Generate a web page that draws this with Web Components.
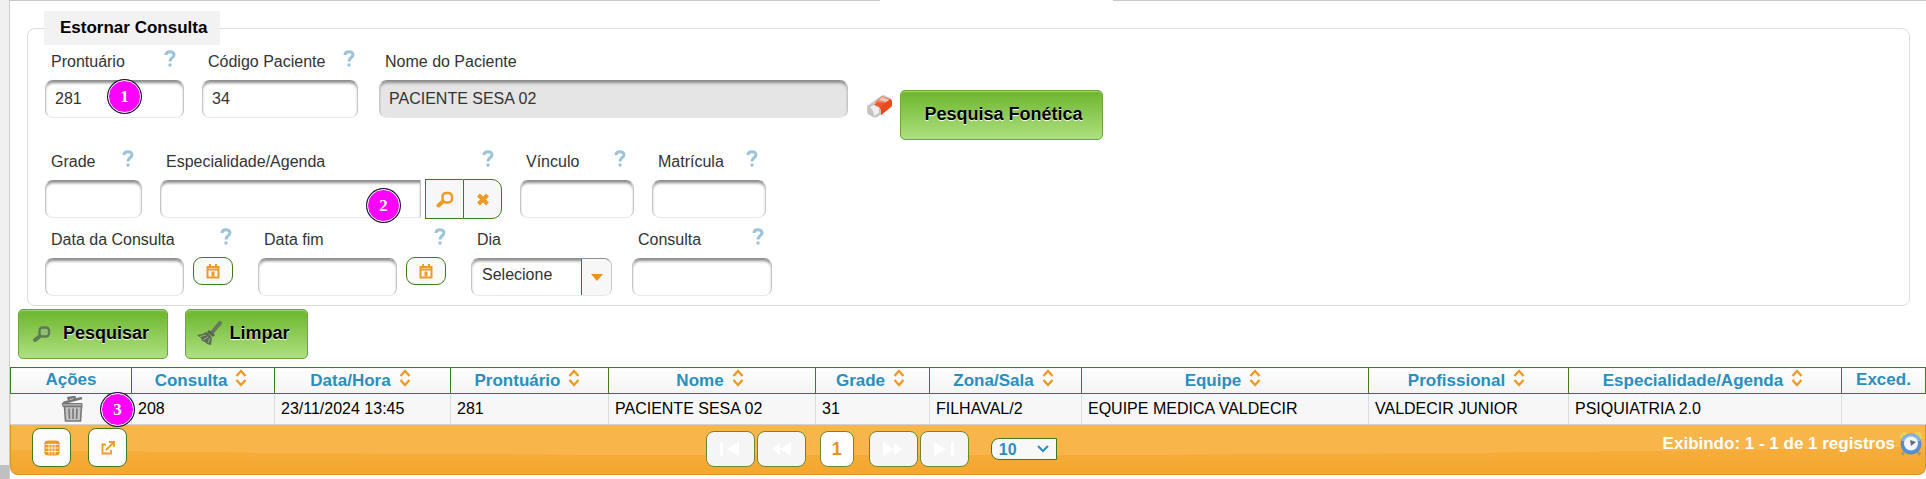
<!DOCTYPE html>
<html lang="pt-BR">
<head>
<meta charset="utf-8">
<title>Estornar Consulta</title>
<style>
html{background:linear-gradient(#c0c0c0,#c0c0c0) left bottom/9px 14px no-repeat #f0f0f0}
body{margin:0;font-family:"Liberation Sans",Arial,sans-serif;font-size:16px;color:#333}
</style>
</head>
<body>
<estorno-page></estorno-page>

<template id="t-icon"><style>
:host{display:inline-block;line-height:0;flex:none}
svg{display:block}
</style></template>

<template id="t-badge"><style>
:host{position:absolute;width:31px;height:31px;border-radius:50%;background:#f0f;border:1px solid #fff;box-shadow:0 0 0 1px #201040;color:#fff;font:bold 17px/31px "Liberation Serif",serif;text-align:center;z-index:2}
</style><slot></slot></template>

<template id="t-field"><style>
:host{display:block;position:relative;flex:none;box-sizing:border-box;width:var(--w)}
.top{display:flex;justify-content:space-between;align-items:flex-start;height:20px;padding:0 var(--help,8px) 0 6px;margin-bottom:11px}
.top ui-icon{margin-top:1px}
label{line-height:26px;white-space:nowrap}
.body{display:flex;align-items:flex-start}
input,.sel{box-sizing:border-box;flex:1;min-width:0;width:100%;height:38px;border:1px solid #c4c4c4;border-top-color:#8f8f8f;border-bottom-color:#e9e9e9;border-radius:8px;background:#fff;font:inherit;color:#333;padding:0 9px 1px;box-shadow:inset 0 3px 3px -1px #8c8c8c;outline:0}
:host([readonly]) input{background:#e5e5e5}
:host([joined]) input{border-radius:8px 0 0 8px;margin-right:4px}
.sel{display:flex;padding:0;position:relative;overflow:hidden}
select{appearance:none;border:0;background:transparent;font:inherit;color:inherit;flex:1;padding:0 10px 6px;outline:0;width:100%}
.arrow{position:absolute;right:0;top:0;bottom:0;width:29px;border-left:1px solid #3a7a14;background:#f7f7f7;display:grid;place-items:center;pointer-events:none}
</style>
<div class="top"><label for="c"></label></div>
<div class="body"><slot></slot></div></template>

<template id="t-btn"><style>
:host{display:inline-block;flex:none}
button{box-sizing:border-box;font:inherit;margin:0;cursor:pointer;display:flex;align-items:center;justify-content:center;padding:0}
:host([kind=green]) button{width:var(--w);height:50px;gap:var(--gap,10px);border:1px solid #6ba63a;border-radius:5px;background:linear-gradient(#6cb52d,#aee080);box-shadow:inset 0 1px 1px #a5d57c;color:#000;font-weight:bold;font-size:18px;text-shadow:0 1px 1px #fff;padding-bottom:2px}
:host([kind=cal]) button{width:40px;height:28px;margin:-1px 0 0 9px;border:1px solid #3f7a1e;border-radius:9px;background:#fafafa}
:host([kind=join]) button{width:38px;height:40px;margin-top:-1px;border:1px solid #3f7a1e;border-right:0;background:#f7f7f7}
:host([kind=joinend]) button{width:39px;height:40px;margin-top:-1px;border:1px solid #3f7a1e;border-radius:0 10px 10px 0;background:#f7f7f7}
:host([kind=tool]) button{width:39px;height:39px;border:1px solid #3f7a1e;border-radius:8px;background:#fcfcfc}
:host([kind=page]) button{width:49px;height:36px;border:1px solid #6d8a2a;border-radius:8px;background:#f5f5f5}
:host([kind=current]) button{width:34px;height:36px;border:1px solid #6d8a2a;border-radius:8px;background:#fff;color:#e8941a;font-weight:bold;font-size:18px}
:host([kind=bare]) button{border:0;background:none}
</style><button type="button"><slot></slot></button></template>

<template id="t-grid"><style>
:host{display:block;position:relative}
table{width:100%;border-collapse:collapse;table-layout:fixed;color:#000}
th{height:23px;padding:0 0 2px;border:1px solid #3f7a1e;background:linear-gradient(#fff,#f3f3f3);color:#2a8fbd;font-weight:bold;font-size:17px;white-space:nowrap;line-height:20px}
th a{color:inherit;text-decoration:none}
th ui-icon{margin:0 4px 0 8px;vertical-align:-1px}
td{height:30px;padding:0 6px;border-left:1px solid #ddd;border-bottom:1px solid #d5d0c8;background:#f7f7f7;line-height:20px;white-space:nowrap}
td.act{text-align:center;padding:0 0 0 2px;line-height:0}
</style>
<table><colgroup></colgroup><thead><tr></tr></thead><tbody><tr></tr></tbody></table>
<slot></slot></template>

<template id="t-pager"><style>
:host{display:grid;grid-template-columns:7fr auto 9fr;height:50px;box-sizing:border-box;border:1px solid #d9922a;border-top:0;border-radius:0 0 8px 8px;background:radial-gradient(ellipse 80% 62% at 45% 0,#f7b54a 99%,transparent 100%),linear-gradient(#f7b248,#f4a72e);overflow:hidden;color:#fff;font-weight:bold;padding:3px 2px 0 21px}
.l{display:flex;gap:17px}
.c{display:flex;padding-top:3px;gap:2px}
.cur{margin:0 13px 0 12px}
.size{position:relative;margin:7px 0 0 20px}
select{appearance:none;box-sizing:border-box;width:66px;height:22px;border:1px solid #3f7a1e;border-radius:8px 0 0 8px;background:#f8f8f8;font:bold 16px "Liberation Sans",sans-serif;color:#2a8fbd;padding:0 0 0 7px;outline:0}
.size ui-icon{position:absolute;right:8px;top:7px;pointer-events:none}
.r{display:flex;justify-content:flex-end;align-items:flex-start;gap:4px;line-height:32px}
.r span{font-size:17px}
.r ui-icon{margin-top:3px}
</style>
<div class="l"><ui-button kind="tool" label="Exportar planilha"><ui-icon name="sheet"></ui-icon></ui-button><ui-button kind="tool" label="Abrir"><ui-icon name="open"></ui-icon></ui-button></div>
<div class="c"><ui-button kind="page" label="Primeira"><ui-icon name="first"></ui-icon></ui-button><ui-button kind="page" label="Anterior"><ui-icon name="prev"></ui-icon></ui-button><ui-button kind="current" class="cur">1</ui-button><ui-button kind="page" label="Próxima"><ui-icon name="next"></ui-icon></ui-button><ui-button kind="page" label="Última"><ui-icon name="last"></ui-icon></ui-button><div class="size"><select aria-label="Registros por página"><option>10</option></select><ui-icon name="chev"></ui-icon></div></div>
<div class="r"><span>Exibindo: 1 - 1 de 1 registros</span><ui-icon name="clock"></ui-icon></div>
</template>

<template id="t-page"><style>
:host{display:flex;flex-direction:column;position:relative;margin-left:9px;border-left:1px solid #ccc;background:#fff;min-height:100vh;box-sizing:border-box}
.tabs{height:1px;display:grid;grid-template-columns:870fr 233fr 813fr}
.tabs i{background:#c9c9c9}
.tabs i:nth-child(2){background:#fff}
fieldset{margin:10px 16px 0 17px;padding:4px 17px 9px;border:1px solid #ddd;border-radius:8px;min-width:0}
legend{background:#f2f2f2;color:#000;font-weight:bold;font-size:17px;line-height:24px;height:34px;box-sizing:border-box;padding:5px 16px;margin:0 0 0 -1px;width:176px;white-space:nowrap}
.row{display:flex;align-items:flex-start}
.r1{gap:18px;height:100px}
.r2{gap:18px;height:78px}
.r3{gap:25px}
.nome{margin-left:3px}
.er{margin:45px 0 0 0}
.fon{margin:41px 0 0 -11px}
.acts{display:flex;gap:17px;padding:3px 8px 8px}
</style>
<div class="tabs"><i></i><i></i><i></i></div>
<fieldset><legend>Estornar Consulta</legend>
<div class="row r1">
<ui-field label="Prontuário" value="281" help style="--w:139px"><step-badge slot="over" style="left:63px;top:31px">1</step-badge></ui-field>
<ui-field label="Código Paciente" value="34" help style="--w:156px;--help:3px"></ui-field>
<ui-field class="nome" label="Nome do Paciente" value="PACIENTE SESA 02" readonly style="--w:469px"></ui-field>
<ui-button class="er" kind="bare" label="Apagar"><ui-icon name="eraser"></ui-icon></ui-button>
<ui-button class="fon" kind="green" style="--w:203px"><span style="padding-left:4px">Pesquisa Fonética</span></ui-button>
</div>
<div class="row r2">
<ui-field label="Grade" help style="--w:97px"></ui-field>
<ui-field label="Especialidade/Agenda" help joined style="--w:342px"><ui-button kind="join" label="Buscar"><ui-icon name="search"></ui-icon></ui-button><ui-button kind="joinend" label="Limpar campo"><ui-icon name="x"></ui-icon></ui-button><step-badge slot="over" style="left:207px;top:40px">2</step-badge></ui-field>
<ui-field label="Vínculo" help style="--w:114px"></ui-field>
<ui-field label="Matrícula" help style="--w:114px"></ui-field>
</div>
<div class="row r3">
<ui-field label="Data da Consulta" help style="--w:188px;--help:1px"><ui-button kind="cal" label="Calendário"><ui-icon name="cal"></ui-icon></ui-button></ui-field>
<ui-field label="Data fim" help style="--w:188px;--help:0px"><ui-button kind="cal" label="Calendário"><ui-icon name="cal"></ui-icon></ui-button></ui-field>
<ui-field label="Dia" select="Selecione" style="--w:141px"></ui-field>
<ui-field label="Consulta" help style="--w:140px;margin-left:-5px"></ui-field>
</div>
</fieldset>
<div class="acts">
<ui-button kind="green" style="--w:150px;--gap:12px"><ui-icon name="gsearch"></ui-icon><span style="padding-right:4px">Pesquisar</span></ui-button>
<ui-button kind="green" style="--w:123px;--gap:7px"><ui-icon name="broom"></ui-icon><span style="padding-right:6px">Limpar</span></ui-button>
</div>
<data-grid><step-badge style="left:91px;top:26px">3</step-badge></data-grid>
<grid-pager></grid-pager>
</template>

<script>
const O='#ee9a27';
const ICONS={
help:[12,17,`<path d="M2 5C2 .6 10 .6 10 4.700C10 7.600 6 7.700 6 11.500" fill="none" stroke="#9cc3da" stroke-width="3"/><circle cx="6" cy="15" r="1.700" fill="#9cc3da"/>`],
search:[18,17,`<path d="M2.500 14.500L7 10.500" stroke="${O}" stroke-width="4" stroke-linecap="round"/><rect x="6.500" y="2" width="9.500" height="9.500" rx="3.500" fill="none" stroke="${O}" stroke-width="2.400"/>`],
gsearch:[18,17,`<path d="M2 15L7 11" stroke="#5d7a50" stroke-width="3.800" stroke-linecap="round"/><rect x="6.500" y="2.500" width="9.500" height="9" rx="3" fill="#94bd74" stroke="#5d7a50" stroke-width="2.300"/>`],
x:[14,13,`<path d="M2.500 2L11.500 11M11.500 2L2.500 11" stroke="${O}" stroke-width="4"/>`],
cal:[14,15,`<path d="M1.500 3h11v10.500h-11zM1 5.500h12" fill="none" stroke="${O}" stroke-width="2"/><path d="M4 0v4M10 0v4" stroke="${O}" stroke-width="2"/><path d="M5.500 7.500h3v5h-3z" fill="${O}"/>`],
down:[12,7,`<path d="M0 0h12L6 7z" fill="#e8941a"/>`],
sort:[12,18,`<path d="M1.500 7L6 2l4.500 5M1.500 11L6 16l4.500-5" fill="none" stroke="${O}" stroke-width="2.400"/>`],
chev:[12,8,`<path d="M1 1l5 5 5-5" fill="none" stroke="#2a8fbd" stroke-width="2"/>`],
sheet:[16,16,`<rect x=".5" y=".5" width="15" height="15" rx="3" fill="${O}"/><path d="M1.500 4.500h13M1.500 8h13M1.500 11.500h13M5 3.500v11M8 3.500v11M11 3.500v11" stroke="#fff" stroke-width=".8"/>`],
open:[14,14,`<path d="M5 3.500H1.500v9h8.500V9M5 9l7-7M8 1h5v5" fill="none" stroke="${O}" stroke-width="1.800"/>`],
first:[24,16,`<path d="M2 1h3v14H2zM21 1v14L9 8z" fill="#fff"/>`],
prev:[24,16,`<path d="M11 2L3 8l8 6M22 1v14L11 8z" fill="#fff"/>`],
next:[24,16,`<path d="M2 1l11 7L2 15zM13 2l8 6-8 6" fill="#fff"/>`],
last:[24,16,`<path d="M2 1l12 7-12 7zM19 1h3v14h-3z" fill="#fff"/>`],
eraser:[27,24,`<path d="M1 12L15 2q2-1 3-1l6 3q2 1 2 3v4q0 1-2 3L11 23q-2 1-4 0l-5-3q-1-1-1-3z" fill="#cfc9c6"/><path d="M9 8l7-6 8 3q2 1 2 3l-1 5-10 8-1-9z" fill="#ee8468"/><path d="M14 13L24 5q2 1 2 3v4l-11 9z" fill="#ea4a1c"/><path d="M11 8l9 1-6 5-6-3z" fill="#f0572a"/><path d="M2 12l4-2 7 3 2 3v4l-4 3-3 0-6-3z" fill="#c4c4c4"/><path d="M4 13l4-2 5 3v5l-5 3-1-5z" fill="#efefef"/><path d="M16 3l7 3-3 2-7-2z" fill="#e9c8c0"/>`],
broom:[25,25,`<path d="M23 2L15.500 11" stroke="#66785c" stroke-width="4" stroke-linecap="round"/><path d="M12 9l6 5-2 2-6-5z" fill="#56664e"/><path d="M9 11q3 1 6 6l-1 7-4-1-2-2-3-1-1-3-4-3q5 0 9-3z" fill="#5d6b57"/><path d="M3 15.500l6-1.500M6 19l5-3M11 22l2-5" stroke="#93b47b" stroke-width="1"/>`],
trash:[23,26,`<path d="M2 7L21 2M8 4l-.5-2 6-1 .5 2" stroke="#777" stroke-width="2.500" fill="none"/><path d="M1 7.500h20v3H2z" fill="#aaa" stroke="#777"/><path d="M3.500 10.500h17L19.500 25h-15z" fill="#c4c4c4" stroke="#777" stroke-width="1.600"/><path d="M8 12.500l.5 10.500M12 12.500V23M16 12.500l-.5 10.500" stroke="#777" stroke-width="1.600"/>`],
clock:[24,26,`<circle cx="5" cy="5" r="4" fill="#e6cf5c"/><circle cx="19" cy="5" r="4" fill="#e6cf5c"/><path d="M5 21l-2 3M19 21l2 3" stroke="#a39a83" stroke-width="3"/><circle cx="12" cy="13" r="10.500" fill="#5590cc"/><path d="M2.500 10a10 10 0 0 1 19 0z" fill="#86b6e2"/><circle cx="12" cy="12.500" r="7" fill="#f1f5f8"/><path d="M11 9l1 6 5-4z" fill="#61707c"/>`]
};
const mount=(el,id)=>{const r=el.attachShadow({mode:'open'});r.append(document.getElementById(id).content.cloneNode(true));return r};
class UiIcon extends HTMLElement{
 connectedCallback(){if(this.shadowRoot)return;const r=mount(this,'t-icon');const[w,h,p]=ICONS[this.getAttribute('name')];
 r.innerHTML+=`<svg width="${w}" height="${h}" viewBox="0 0 ${w} ${h}" aria-hidden="true">${p}</svg>`}}
class StepBadge extends HTMLElement{connectedCallback(){if(!this.shadowRoot)mount(this,'t-badge')}}
class UiButton extends HTMLElement{
 connectedCallback(){if(this.shadowRoot)return;const r=mount(this,'t-btn');const l=this.getAttribute('label');if(l)r.querySelector('button').setAttribute('aria-label',l)}}
class UiField extends HTMLElement{
 connectedCallback(){if(this.shadowRoot)return;const r=mount(this,'t-field');
 r.querySelector('label').textContent=this.getAttribute('label');
 if(this.hasAttribute('help'))r.querySelector('.top').insertAdjacentHTML('beforeend','<ui-icon name="help"></ui-icon>');
 const b=r.querySelector('.body');
 if(this.hasAttribute('select'))b.insertAdjacentHTML('afterbegin',`<div class="sel"><select id="c"><option>${this.getAttribute('select')}</option></select><span class="arrow"><ui-icon name="down"></ui-icon></span></div>`);
 else{const i=document.createElement('input');i.id='c';i.type='text';i.value=this.getAttribute('value')||'';i.readOnly=this.hasAttribute('readonly');b.prepend(i)}
 b.insertAdjacentHTML('afterend','<slot name="over"></slot>')}}
const COLS=[['Ações',121],['Consulta',143,'208'],['Data/Hora',176,'23/11/2024 13:45'],['Prontuário',158,'281'],['Nome',207,'PACIENTE SESA 02'],['Grade',114,'31'],['Zona/Sala',152,'FILHAVAL/2'],['Equipe',287,'EQUIPE MEDICA VALDECIR'],['Profissional',200,'VALDECIR JUNIOR'],['Especialidade/Agenda',273,'PSIQUIATRIA 2.0'],['Exced.',84,'']];
class DataGrid extends HTMLElement{
 connectedCallback(){if(this.shadowRoot)return;const r=mount(this,'t-grid');
 const sum=COLS.reduce((a,c)=>a+c[1],0);
 r.querySelector('colgroup').innerHTML=COLS.map(c=>`<col style="width:${c[1]/sum*100}%">`).join('');
 r.querySelector('thead tr').innerHTML=COLS.map(([n],i)=>i&&i<10?`<th scope="col"><a href="#">${n}<ui-icon name="sort"></ui-icon></a></th>`:`<th scope="col">${n}</th>`).join('');
 r.querySelector('tbody tr').innerHTML=COLS.map((c,i)=>i?`<td>${c[2]}</td>`:`<td class="act"><ui-button kind="bare" label="Estornar"><ui-icon name="trash"></ui-icon></ui-button></td>`).join('')}}
class GridPager extends HTMLElement{connectedCallback(){if(!this.shadowRoot)mount(this,'t-pager')}}
class EstornoPage extends HTMLElement{connectedCallback(){if(!this.shadowRoot)mount(this,'t-page')}}
customElements.define('ui-icon',UiIcon);
customElements.define('step-badge',StepBadge);
customElements.define('ui-button',UiButton);
customElements.define('ui-field',UiField);
customElements.define('data-grid',DataGrid);
customElements.define('grid-pager',GridPager);
customElements.define('estorno-page',EstornoPage);
</script>
</body>
</html>
